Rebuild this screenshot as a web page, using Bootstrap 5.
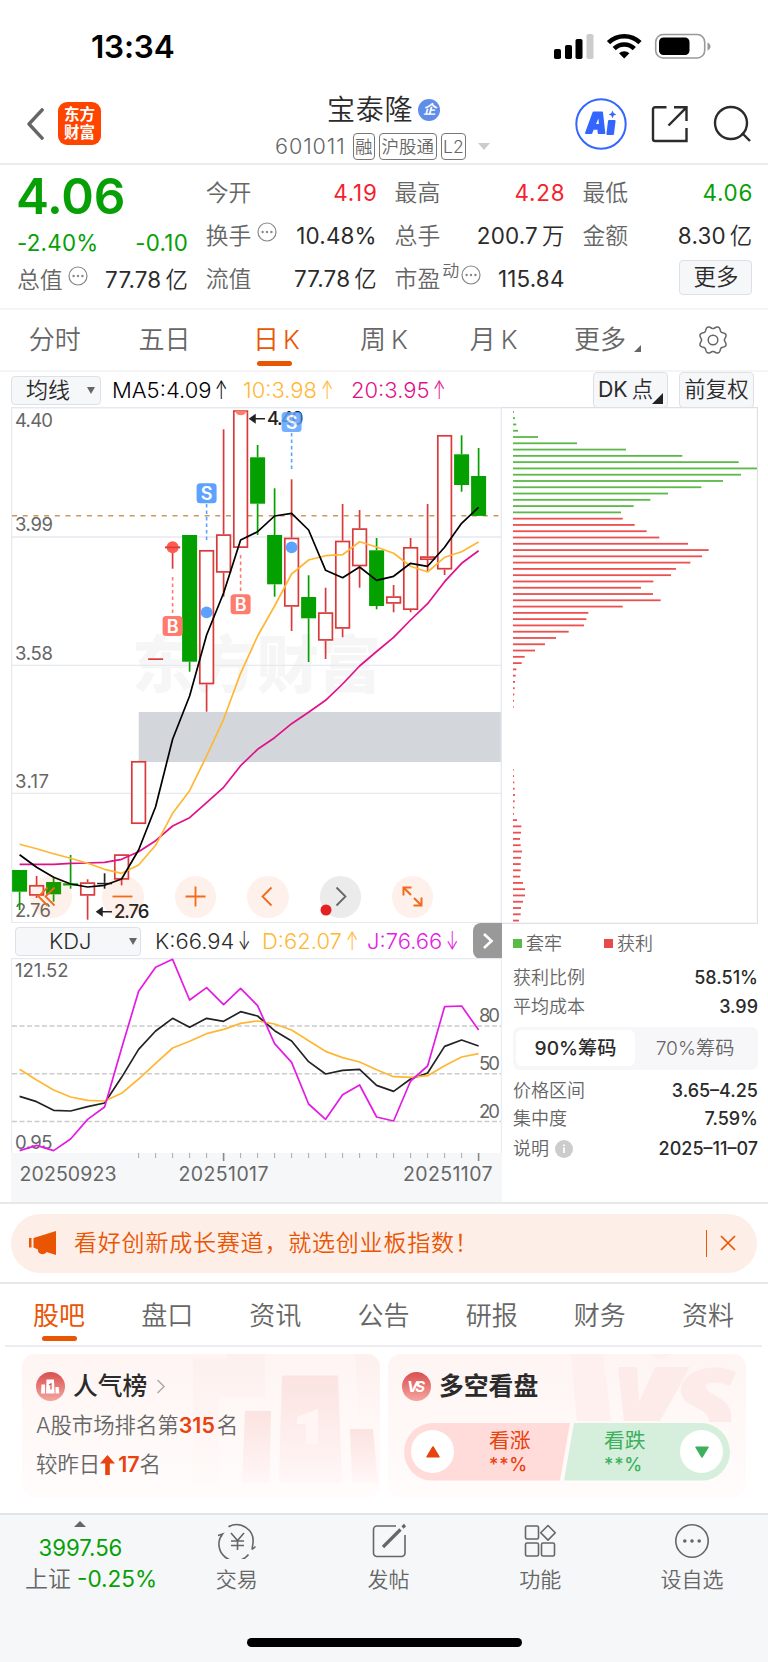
<!DOCTYPE html>
<html lang="zh-CN">
<head>
<meta charset="utf-8">
<meta name="viewport" content="width=device-width, initial-scale=1">
<title>宝泰隆 601011</title>
<link href="https://cdn.jsdelivr.net/npm/bootstrap@5.3.0/dist/css/bootstrap.min.css" rel="stylesheet">
<style>
body{font-family:Inter,"Noto Sans CJK SC",sans-serif;color:#2b2b2b;background:#fff;line-height:1;font-size:22px;font-weight:400;width:768px;height:1662px;overflow:hidden}
svg{display:block;flex:none}
svg text{font-family:Inter,"Noto Sans CJK SC",sans-serif}
.cjk-light{font-weight:350}
.gray{color:#666}.up{color:#f5222d}.down{color:#06a006}.brand{color:#ea5504}
.status{height:92px;padding:2px 57px 0 91px}
.clock{font-size:31.5px;font-weight:600;letter-spacing:-.2px;color:#000}
.top{height:73px;border-bottom:2px solid #ececec;padding:0 17px 0 26px}
.logo{width:43px;height:43px;border-radius:9px;background:#ff4400;color:#fff;font-size:15.5px;line-height:17.5px;font-weight:700;margin-left:14px}
.sname{font-size:28px;letter-spacing:.8px}
.ent{width:22px;height:22px;border-radius:50%;background:#5f8de9;color:#fff;font-size:13px;font-weight:700;margin-left:5px}
.tagbox{border:1.5px solid #777;border-radius:4px;height:27px;font-size:17.5px;padding:0 1.5px;color:#666}
.quote{height:145px;border-bottom:2px solid #f5f5f6;display:grid;grid-template-columns:171px 171px 170px 170px;column-gap:17.8px;padding:7px 0 0 17px;align-content:start}
.qcell{height:43px;font-size:22.4px}
.qcell>:last-child:not(.gray):not(.morebtn){letter-spacing:.2px}
.qcell .up,.qcell .down{letter-spacing:.8px!important;margin-right:-.8px}
.qcell .gray{font-size:22.8px}
.price{font-size:49.5px;font-weight:600;letter-spacing:-.2px;margin-left:-1px}
.morebtn{width:73px;height:35px;background:#f6f7f9;border:1.5px solid #dde0e8;border-radius:4px;font-size:22.5px}
.periods{height:62px;border-bottom:2px solid #f5f5f6;font-size:26px}
.periods>div,.tabs>div{flex:1 1 0;min-width:0;height:100%;position:relative}
.on::after{content:"";position:absolute;left:50%;margin-left:-17.5px;width:35.5px;height:5.5px;border-radius:3px;background:#ea5504;bottom:4px}
.ind{height:35px;font-size:22px;padding:0 12px 0 11px}
.arw{display:inline-block;transform:scale(.68,1.15);transform-origin:left;margin-left:4px}
.pick{background:#f6f7f9;border:1.5px solid #dde0e8;border-radius:4px;height:29px}
.tallbtn{background:#f6f7f9;border:1.5px solid #dde0e8;border-radius:4px;height:36px;width:75px;font-size:21.3px;position:relative}
.tri{width:0;height:0;border:solid transparent}
.leftcol{width:491px;margin-left:11px}
.rightcol{width:256px;color:#666;font-size:18px}
.tools{position:absolute;left:19px;top:469px;gap:30.9px}
.tools div{width:41.5px;height:41.5px;border-radius:50%;background:rgba(240,90,20,.085);position:relative}
.nextbtn{width:29px;height:36px;background:#999;border-radius:8px 0 0 8px}
.stat{margin-left:11px;width:245px}
.stat b{font-weight:500;color:#2b2b2b;font-size:18px}
.seg{height:42.5px;background:#f7f7f9;border-radius:7px;padding:3px;margin:6px 0 7px;font-size:19.2px}
.seg .cur{background:#fff;border-radius:6px;width:119px;height:36px;color:#2b2b2b;font-weight:500}
.promo{height:58.5px;border-radius:30px;background:#fdeee8;margin:10px 11px 10px;padding:0 20px 0 17px;font-size:23px;letter-spacing:.8px}
.tabs{height:63px;border-bottom:2px solid #ededef;margin:0 6px 0 5px;font-size:26px;padding-top:2px}
.panel{width:358px;height:143px;border-radius:13px;background:linear-gradient(#fef5f3,#fffcfb);position:relative;overflow:hidden}
.panel>.deco{position:absolute;left:0;top:0}
.ptitle{font-size:24.8px;font-weight:500;color:#2b2b2b}
.hot{color:#e8420f;font-weight:600}
.vote{height:58px;width:326px;margin-left:16px;position:relative;font-size:20.8px}
.half{width:166px;height:58px}
.half.r{background:#ffdcd9;border-radius:29px 0 0 29px;clip-path:polygon(0 0,100% 0,156px 100%,0 100%);color:#e8420f}
.half.g{background:#d5efdc;border-radius:0 29px 29px 0;clip-path:polygon(10px 0,100% 0,100% 100%,0 100%);margin-left:-6px;color:#3cb05c}
.disc{width:43px;height:43px;border-radius:50%;background:#fff}
.pct{font-size:18px;font-weight:500;letter-spacing:.8px;margin-top:5px}
.dock{height:149px;border-top:2px solid #e3e4e6;background:#f6f7f9;position:relative;font-size:21px;color:#666}
.dock>.it{width:151.9px;padding-top:8px}
.homebar{position:absolute;left:247px;top:123px;width:275px;height:9px;border-radius:5px;background:#000}
</style>
</head>
<body>
<svg width="0" height="0" class="position-absolute"><symbol id="dots" viewBox="0 0 20 20"><circle cx="10" cy="10" r="9" fill="none" stroke="#888" stroke-width="1.2"/><g fill="#888"><circle cx="5.6" cy="10" r="1.2"/><circle cx="10" cy="10" r="1.2"/><circle cx="14.4" cy="10" r="1.2"/></g></symbol></svg>

<div class="status d-flex align-items-center justify-content-between">
  <div class="clock">13:34</div>
  <svg width="158" height="27" viewBox="0 0 158 27" style="margin-top:-2px">
    <rect x="1" y="16" width="7" height="10" rx="1.8"/><rect x="12" y="12" width="7" height="14" rx="1.8"/><rect x="22.500" y="6" width="7" height="20" rx="1.800"/><rect x="33.500" y="1" width="7" height="25" rx="1.800" fill="#ccc"/>
    <g fill="none" stroke="#000" stroke-width="4.600"><path d="M55.500 9.700a22.500 22.500 0 0 1 31.500 0"/><path d="M61.200 15.600a14.500 14.500 0 0 1 20.100 0"/></g>
    <path d="M71.200 25.500l-5.200-5.200a7.500 7.500 0 0 1 10.400 0z"/>
    <rect x="102.700" y="1.500" width="49" height="23.500" rx="7.500" fill="none" stroke="#999" stroke-width="1.600"/><rect x="106" y="4.500" width="30.500" height="17.500" rx="4.500"/><path d="M154.500 9.500v8c4-1.500 4-6.500 0-8z" fill="#999"/>
  </svg>
</div>

<header class="top d-flex align-items-center">
  <div class="d-flex align-items-center" style="width:249px;margin-top:-8px">
    <svg width="18" height="32" viewBox="0 0 18 32"><path d="M16 2L3 16l13 14" fill="none" stroke="#666" stroke-width="3.400" stroke-linecap="square" stroke-linejoin="round"/></svg>
    <div class="logo d-flex flex-column align-items-center justify-content-center"><span>东方</span><span>财富</span></div>
  </div>
  <div class="d-flex flex-column align-items-start" style="width:238px;margin-top:2px">
    <div class="d-flex align-items-center" style="margin-left:52px;height:36px"><span class="sname cjk-light">宝泰隆</span><span class="ent d-flex align-items-center justify-content-center fst-italic">企</span></div>
    <div class="d-flex align-items-center" style="height:38px;gap:4px"><span class="gray" style="font-size:21.600px;letter-spacing:.9px;margin-right:3px;font-weight:300">601011</span><span class="tagbox cjk-light d-flex align-items-center">融</span><span class="tagbox cjk-light d-flex align-items-center">沪股通</span><span class="tagbox d-flex align-items-center fw-light">L2</span><i class="tri" style="border-width:7px 6px 0;border-top-color:#ccc;margin-left:8px"></i></div>
  </div>
  <div class="d-flex align-items-center justify-content-end" style="width:238px;gap:24px;margin-top:-7px">
    <svg width="52" height="52" viewBox="0 0 52 52"><circle cx="26" cy="26" r="24.700" fill="none" stroke="#3466ff" stroke-width="2"/><g fill="#3466ff" stroke="#3466ff" stroke-linejoin="round" stroke-width="2"><path d="M18.500 14.500h8.500l2.300 20.500h-5.600l-.4-4.300h-5.300l-1.600 4.300H11z"/><path d="M34 23h5.600l-1.600 13h-5.600z"/></g><path d="M23.400 20.500l.5 5.500h-2.800z" fill="#fff"/><path d="M37.500 12.500l1.200 2.700 2.700 1.200-2.700 1.200-1.200 2.700-1.200-2.700-2.700-1.200 2.700-1.200z" fill="#3466ff"/></svg>
    <svg width="38" height="38" viewBox="0 0 38 38" fill="none" stroke="#2b2b2b" stroke-width="2.400"><path d="M15.500 2.300H4a2 2 0 0 0-2 2V34a2 2 0 0 0 2 2h31.500V23M23 2.300h12.500V16M35.500 2.300L17.500 20.500"/></svg>
    <svg width="38" height="38" viewBox="0 0 38 38" fill="none" stroke="#2b2b2b" stroke-width="2.400"><circle cx="18" cy="18" r="16"/><path d="M29 28l8 8"/></svg>
  </div>
</header>

<section class="quote">
  <div>
    <div class="price down d-flex align-items-center" style="height:48px;padding-top:1px">4.06</div>
    <div class="d-flex justify-content-between align-items-center down" style="height:42px;padding-top:4px;font-size:22.300px;letter-spacing:.25px"><span>-2.40%</span><span>-0.10</span></div>
    <div class="qcell d-flex justify-content-between align-items-center" style="height:37px"><span class="gray cjk-light d-flex">总值<svg width="20" height="20" style="margin:-3px 0 0 5px"><use href="#dots"/></svg></span><span>77.78<span class="cjk-light ps-1">亿</span></span></div>
  </div>
  <div>
    <div class="qcell d-flex justify-content-between align-items-center"><span class="gray cjk-light">今开</span><span class="up">4.19</span></div>
    <div class="qcell d-flex justify-content-between align-items-center"><span class="gray cjk-light d-flex">换手<svg width="20" height="20" style="margin:-3px 0 0 6px"><use href="#dots"/></svg></span><span>10.48%</span></div>
    <div class="qcell d-flex justify-content-between align-items-center"><span class="gray cjk-light">流值</span><span>77.78<span class="cjk-light ps-1">亿</span></span></div>
  </div>
  <div>
    <div class="qcell d-flex justify-content-between align-items-center"><span class="gray cjk-light">最高</span><span class="up">4.28</span></div>
    <div class="qcell d-flex justify-content-between align-items-center"><span class="gray cjk-light">总手</span><span>200.7<span class="cjk-light ps-1">万</span></span></div>
    <div class="qcell d-flex justify-content-between align-items-center"><span class="gray cjk-light d-flex">市盈<span style="font-size:17px;margin:-5px 0 0 2px">动</span><svg width="20" height="20" style="margin:-3px 0 0 2px"><use href="#dots"/></svg></span><span>115.84</span></div>
  </div>
  <div>
    <div class="qcell d-flex justify-content-between align-items-center"><span class="gray cjk-light">最低</span><span class="down">4.06</span></div>
    <div class="qcell d-flex justify-content-between align-items-center"><span class="gray cjk-light">金额</span><span>8.30<span class="cjk-light ps-1">亿</span></span></div>
    <div class="qcell d-flex justify-content-end align-items-center"><span class="morebtn d-flex align-items-center justify-content-center cjk-light" style="margin-top:-4px">更多</span></div>
  </div>
</section>

<nav class="periods d-flex gray cjk-light">
  <div class="d-flex align-items-center justify-content-center">分时</div>
  <div class="d-flex align-items-center justify-content-center">五日</div>
  <div class="d-flex align-items-center justify-content-center on brand"><span class="ps-1">日<span style="margin-left:4px">K</span></span></div>
  <div class="d-flex align-items-center justify-content-center">周<span style="margin-left:5px">K</span></div>
  <div class="d-flex align-items-center justify-content-center">月<span style="margin-left:5px">K</span></div>
  <div class="d-flex align-items-center justify-content-center"><span class="d-flex ps-2">更多<i class="tri" style="border-width:0 0 7px 7px;border-bottom-color:#666;margin:18px 0 0 8px"></i></span></div>
  <div class="d-flex align-items-center justify-content-center"><svg id="gear" width="30" height="30" viewBox="-15 -15 30 30" fill="none" stroke="#666" stroke-width="1.500"><circle r="4.800"/><path id="gearPath" stroke-linejoin="round"/></svg></div>
</nav>

<div class="ind d-flex align-items-center">
  <div class="pick d-flex align-items-center cjk-light" style="width:90px;padding-left:14px;margin-top:1px">均线<i class="tri" style="border-width:7px 4px 0;border-top-color:#666;margin-left:17px"></i></div>
  <span class="fw-light text-nowrap" style="margin-left:11px;color:#000;width:131px">MA5:4.09<span class="arw">↑</span></span>
  <span class="fw-light text-nowrap" style="color:#ffb733;width:108px">10:3.98<span class="arw">↑</span></span>
  <span class="fw-light text-nowrap" style="color:#e0118a">20:3.95<span class="arw">↑</span></span>
  <div class="tallbtn d-flex align-items-center ms-auto" style="padding-left:4px">DK<span class="cjk-light" style="margin-left:4px">点</span><i class="tri position-absolute" style="border-width:0 0 11px 11px;border-bottom-color:#222;right:4px;bottom:3px"></i></div>
  <div class="tallbtn d-flex align-items-center justify-content-center cjk-light" style="margin-left:11px;margin-right:2px">前复权</div>
</div>

<main class="d-flex" style="height:795px">
  <div class="leftcol">
    <div class="position-relative">
      <svg id="kline" width="491" height="516" viewBox="11 407 491 516"></svg>
      <div class="tools d-flex">
        <div><svg width="41" height="41" viewBox="-20.500 -20.500 41 41" fill="none" stroke="#f26a1b" stroke-width="1.800"><path d="M-3-9l-9 9 9 9M4-9l-9 9 9 9"/></svg></div>
        <div><svg width="41" height="41" viewBox="-20.500 -20.500 41 41" stroke="#f26a1b" stroke-width="1.800"><path d="M-10 0H10"/></svg></div>
        <div><svg width="41" height="41" viewBox="-20.500 -20.500 41 41" stroke="#f26a1b" stroke-width="1.800"><path d="M-10 0H10M0-10V10"/></svg></div>
        <div><svg width="41" height="41" viewBox="-20.500 -20.500 41 41" fill="none" stroke="#f26a1b" stroke-width="1.800"><path d="M4-9l-9 9 9 9"/></svg></div>
        <div style="background:#ebebeb"><svg width="41" height="41" viewBox="-20.500 -20.500 41 41" fill="none" stroke="#666" stroke-width="1.800" overflow="visible"><path d="M-4-9l9 9-9 9"/><circle cx="-14.500" cy="13.500" r="5.500" fill="#e52020" stroke="none"/></svg></div>
        <div><svg width="41" height="41" viewBox="-20.500 -20.500 41 41" fill="none" stroke="#f26a1b" stroke-width="2"><path d="M-9-1V-9H-1M-9-9L-1.500-1.500M9 1V9H1M9 9L1.500 1.500"/></svg></div>
      </div>
    </div>
    <div class="d-flex align-items-center" style="height:35px;font-size:22px">
      <div class="pick d-flex align-items-center" style="width:126px;margin-left:4px;padding-left:33px;margin-top:1px"><span style="font-weight:300">KDJ</span><i class="tri" style="border-width:7px 4px 0;border-top-color:#666;margin-left:37px"></i></div>
      <span class="fw-light text-nowrap" style="margin-left:14px;width:107px">K:66.94<span class="arw">↓</span></span>
      <span class="fw-light text-nowrap" style="color:#ffb733;width:105px">D:62.07<span class="arw">↑</span></span>
      <span class="fw-light text-nowrap" style="color:#e31be3;width:95px">J:76.66<span class="arw">↓</span></span>
      <div class="nextbtn d-flex align-items-center justify-content-center ms-auto"><svg width="12" height="18" viewBox="0 0 12 18"><path d="M2 2l7.500 7L2 16" fill="none" stroke="#fff" stroke-width="2.600"/></svg></div>
    </div>
    <svg id="kdj" width="491" height="244" viewBox="11 958 491 244"></svg>
  </div>
  <div class="rightcol">
    <svg id="chips" width="256" height="517" viewBox="501 407 256 517"></svg>
    <div class="stat">
      <div class="d-flex align-items-center cjk-light" style="height:39.500px"><i style="width:9px;height:9px;background:#5bb947"></i><span style="margin-left:4px;width:78px">套牢</span><i style="width:9px;height:9px;background:#e84a4a"></i><span style="margin-left:4px">获利</span></div>
      <div class="d-flex align-items-center justify-content-between cjk-light" style="height:29px">获利比例<b>58.51%</b></div>
      <div class="d-flex align-items-center justify-content-between cjk-light" style="height:28.500px">平均成本<b>3.99</b></div>
      <div class="seg d-flex align-items-center"><div class="cur d-flex align-items-center justify-content-center">90%筹码</div><div class="flex-fill text-center cjk-light">70%筹码</div></div>
      <div class="d-flex align-items-center justify-content-between cjk-light" style="height:28px">价格区间<b>3.65–4.25</b></div>
      <div class="d-flex align-items-center justify-content-between cjk-light" style="height:28px">集中度<b>7.59%</b></div>
      <div class="d-flex align-items-center cjk-light" style="height:32px">说明<svg width="18" height="18" viewBox="0 0 18 18" style="margin-left:6px"><circle cx="9" cy="9" r="9" fill="#ccc"/><path d="M9 7.500V13M9 4.500v1.800" stroke="#fff" stroke-width="1.800"/></svg><b class="ms-auto">2025–11–07</b></div>
    </div>
  </div>
</main>

<section style="border-top:2px solid #e8e8ea;border-bottom:2px solid #e8e8ea;height:82px" class="overflow-hidden">
  <div class="promo brand d-flex align-items-center cjk-light">
    <svg width="28" height="26" viewBox="0 0 28 26" fill="#ea5504"><path d="M1 8h2.500v9.500H1zM5.500 8L28 1v24l-9.500-3c-1 2-4 3-6.500 1.500-2-1-2-2.500-2-4l-4.500-2z"/></svg>
    <span style="margin-left:18px">看好创新成长赛道，就选创业板指数！</span>
    <i class="ms-auto" style="width:1.500px;height:27px;background:#ea5504"></i>
    <svg width="18" height="18" viewBox="0 0 18 18" style="margin-left:12px"><path d="M2 2l14 14M16 2L2 16" stroke="#ea5504" stroke-width="1.700"/></svg>
  </div>
</section>

<nav class="tabs d-flex gray cjk-light">
  <div class="d-flex align-items-center justify-content-center on brand" style="font-weight:400">股吧</div>
  <div class="d-flex align-items-center justify-content-center">盘口</div>
  <div class="d-flex align-items-center justify-content-center">资讯</div>
  <div class="d-flex align-items-center justify-content-center">公告</div>
  <div class="d-flex align-items-center justify-content-center">研报</div>
  <div class="d-flex align-items-center justify-content-center">财务</div>
  <div class="d-flex align-items-center justify-content-center">资料</div>
</nav>

<section class="d-flex" style="height:166px;padding:7px 22px 0;gap:8px">
  <div class="panel gray" style="font-size:21.400px">
    <svg class="deco" width="358" height="143" viewBox="22 1354 358 143">
      <defs><linearGradient id="fade" x1="0" y1="0" x2="0" y2="1"><stop offset="0" stop-color="#fbe3e1"/><stop offset="1" stop-color="#fff7f6"/></linearGradient><linearGradient id="fade2" x1="0" y1="0" x2="0" y2="1"><stop offset="0" stop-color="#fdf0ee"/><stop offset="1" stop-color="#fffaf9"/></linearGradient></defs>
      <path d="M193 1359h34v-5h38v43h-46v86h-26z" fill="url(#fade2)"/><path d="M355 1354h25v90h-20z" fill="url(#fade2)"/>
      <g fill="url(#fade)"><path d="M282 1375.500h56l4 107h-63z"/><path d="M245 1411h26l-1.500 71.500H242z"/><path d="M350 1429h23l5 53.500h-26z"/></g>
      <path d="M297 1417l21-8v35h-12v-20h-9z" fill="#fff5f4"/>
    </svg>
    <div class="position-relative" style="padding:12px 0 0 14px">
      <div class="d-flex align-items-center" style="height:41px"><svg width="29" height="29" viewBox="0 0 29 29"><defs><linearGradient id="ball" x1="0" y1="0" x2="0" y2="1"><stop offset="0" stop-color="#d94f4f"/><stop offset="1" stop-color="#f6a5a0"/></linearGradient></defs><circle cx="14.500" cy="14.500" r="14.500" fill="url(#ball)"/><path d="M10.500 7.500h7.500l.5 14h-8.500zM5.500 12.500h3.500v9H5zM19.500 15h3.300l.5 6.500h-3.800z" fill="#fff"/><path d="M13 13l2-1.200v5.700" fill="none" stroke="#d94f4f" stroke-width="1.200"/></svg><span class="ptitle" style="margin-left:8px">人气榜</span><svg width="10" height="15" viewBox="0 0 10 15" style="margin-left:9px"><path d="M1.500 1l6.500 6.500L1.500 14" fill="none" stroke="#aaa" stroke-width="1.500"/></svg></div>
      <div class="cjk-light d-flex align-items-center" style="height:38px">A股市场排名第<span class="hot">315</span><span style="margin-left:2px">名</span></div>
      <div class="cjk-light d-flex align-items-center" style="height:39px">较昨日<svg width="15" height="20" viewBox="0 0 15 20" class="ms-0"><path d="M7.500 0L15 8.500H9.800V20H5.200V8.500H0z" fill="#e8420f"/></svg><span class="hot" style="margin-left:3px">17</span><span>名</span></div>
    </div>
  </div>
  <div class="panel">
    <svg class="deco" width="358" height="143" viewBox="388 1354 358 143">
      <path d="M571 1354h32l8 67h-34z" fill="#fdf0ee"/><path d="M649 1354h24l-12 6z" fill="#fdf0ee"/>
      <g fill="#fdebe9"><path d="M618 1367h19l2 35 16-35h35l-30 54h-36z"/><path d="M736 1372c-30-14-62 5-54 24 5 12 28 12 27 26h22c4-24-22-26-25-34-2-8 15-6 24-2z"/></g>
    </svg>
    <div class="position-relative" style="padding-top:12px">
      <div class="d-flex align-items-center" style="height:41px;padding-left:14px"><svg width="29" height="29" viewBox="0 0 29 29"><circle cx="14.500" cy="14.500" r="14.500" fill="url(#ball)"/><text x="14" y="20" text-anchor="middle" fill="#fff" font-size="15" font-weight="700" font-style="italic" textLength="18">VS</text></svg><span class="ptitle" style="margin-left:8px;font-weight:700">多空看盘</span></div>
      <div class="vote d-flex" style="margin-top:15.500px">
        <div class="half r d-flex align-items-center"><div class="disc d-flex align-items-center justify-content-center" style="margin-left:7px"><svg width="14" height="12" viewBox="0 0 14 12"><path d="M7 1l6 9.800H1z" fill="#e8420f" stroke="#e8420f" stroke-width="1.500" stroke-linejoin="round"/></svg></div><div style="margin:2px 0 0 35px">看涨<div class="pct">**%</div></div></div>
        <div class="half g d-flex align-items-center"><div style="margin:2px 0 0 40px">看跌<div class="pct">**%</div></div><div class="disc d-flex align-items-center justify-content-center ms-auto" style="margin-right:7px"><svg width="14" height="12" viewBox="0 0 14 12"><path d="M7 11l6-9.800H1z" fill="#3cb05c" stroke="#3cb05c" stroke-width="1.500" stroke-linejoin="round"/></svg></div></div>
      </div>
    </div>
  </div>
</section>

<footer class="dock d-flex cjk-light">
  <div style="width:161px;padding-top:6px"><i class="tri d-block mx-auto" style="border-width:0 6px 6px;border-bottom-color:#666"></i><div class="down text-center" style="font-size:22.200px;font-weight:400;margin-top:10px">3997.56</div><div style="margin-top:9px;font-size:23px;padding-left:25px" class="text-nowrap">上证<span class="down" style="margin-left:6px;font-weight:400;font-size:22.600px">-0.25%</span></div></div>
  <div class="it d-flex flex-column align-items-center"><svg width="40" height="36" viewBox="0 0 40 36" fill="none" stroke="#666" stroke-width="1.600"><path d="M11.500 3.800A16.500 16.500 0 0 1 36 20l-1 6.500M38.500 23.500l-3.500 3M31.500 31.500A16.500 16.500 0 0 1 5.500 11L1 12.500M5.500 11l-1.500 3"/><path d="M14 10l6.500 7.500L27 10M20.500 17.500V27M14 18h13M14 22.500h13"/></svg><span style="margin-top:10px">交易</span></div>
  <div class="it d-flex flex-column align-items-center"><svg width="36" height="36" viewBox="0 0 36 36" fill="none" stroke="#666" stroke-width="1.600"><path d="M25 3H6a3.500 3.500 0 0 0-3.500 3.500V30A3.500 3.500 0 0 0 6 33.500h24.500A3.500 3.500 0 0 0 34 30V12"/><path d="M12 24l17.500-17.500" stroke-width="3.200"/><path d="M31.500 4.500L34 2" stroke-width="3.200"/></svg><span style="margin-top:10px">发帖</span></div>
  <div class="it d-flex flex-column align-items-center"><svg width="34" height="36" viewBox="0 0 34 36" fill="none" stroke="#666" stroke-width="1.600" stroke-linejoin="round"><rect x="2.500" y="3" width="13" height="13" rx="1.500"/><rect x="2.500" y="20" width="13" height="13" rx="1.500"/><rect x="18.500" y="20" width="13" height="13" rx="1.500"/><path d="M25 2.500l7.300 7.300-7.300 7.300-7.300-7.300z"/></svg><span style="margin-top:10px">功能</span></div>
  <div class="it d-flex flex-column align-items-center"><svg width="36" height="36" viewBox="0 0 36 36"><circle cx="18" cy="18" r="16.200" fill="none" stroke="#666" stroke-width="1.600"/><g fill="#666"><circle cx="10.800" cy="18" r="1.800"/><circle cx="18" cy="18" r="1.800"/><circle cx="25.200" cy="18" r="1.800"/></g></svg><span style="margin-top:10px">设自选</span></div>
  <div class="homebar"></div>
</footer>

<script>
const X = i => 19.6 + 17 * i;
const rect = (x,y,w,h,a) => `<rect x="${x}" y="${y}" width="${w}" height="${h}" ${a}/>`;
const line = (x1,y1,x2,y2,a) => `<line x1="${x1}" y1="${y1}" x2="${x2}" y2="${y2}" ${a}/>`;
const text = (x,y,t,len,a='') => `<text x="${x}" y="${y}" textLength="${len}" font-size="18.500" fill="#666" ${a}>${t}</text>`;
const poly = (ys,c,w=1.7) => `<polyline fill="none" stroke="${c}" stroke-width="${w}" stroke-linejoin="round" points="${ys.map((y,i)=>X(i)+','+y).join(' ')}"/>`;

// Candles: colour, high, body top, body bottom, low
const candles = [
 ['g',870,870,891.7,910],['r',876,885,895.7,898],['g',876.7,882,894.3,901.7],['g',855,883.3,885.5,888.7],
 ['r',879.3,882.3,895.7,919.7],['k',873.3,882.8,884.3,888.7],['r',854.3,854.3,879.7,885.3],['r',761,761,824,824],
 ['d',658.3,658.3,660,660],['d',547,546.6,548.2,568.7],['g',535,535,661.7,671.7],['r',550,550,684.3,711.7],
 ['r',429.3,534.3,572.7,596.7],['r',410.3,410.3,547.9,547.9],['g',445,457.3,503.7,535],['g',488.3,535,584.3,596.7],
 ['r',479.3,537.7,606.7,631],['g',575.3,597,618.3,662],['r',587.7,612.3,640.7,659],['r',504,540.7,628.7,637.3],
 ['r',510,528.3,566.3,587.7],['g',538,550.3,606,609.3],['r',585,596.3,603.7,612.3],['r',538,547,610,612.3],
 ['r',504,556.3,560,571.7],['r',435,435,569.5,575],['g',435.3,454.3,485,491.7],['g',448,476,515.9,515.9]];
const ma5=[854.7,867.3,877.3,884,887,885.3,879,850,806.7,739.3,696,635,593,540,531.7,516,513.3,530,570.3,577.7,567,580.3,576.3,563.3,566.3,547.3,523.3,507.3];
const ma10=[844.3,848.7,853.7,858.3,863.3,869.3,873.3,865,845.3,813.3,790.7,756,719.3,673.3,636,606,574,560,555.7,554.7,541.7,547,553.3,566.3,572,557.3,551.7,542];
const ma20=[864.3,864.3,864.3,863.3,863,862.3,859.3,851.7,840.7,826,817.7,802.7,787.3,765.7,749.3,737.7,723.7,712.3,700.3,684,666,651.5,637.3,620,603.7,581.7,563.3,550.7];

let s = text(132,688,'东方财富',249,'style="font-size:62px;font-weight:900;fill:#f6f6f7"');
s += rect(138.7,712,363,50,'fill="#d3d6db"');
[407.7,537,665.4,793.4,922.6].forEach(y => s += line(11,y,502,y,'stroke="#e6e9f0" stroke-width="1.400"'));
s += line(11.6,407,11.6,923,'stroke="#e6e9f0" stroke-width="1.300"') + line(501.3,407,501.3,923,'stroke="#e6e9f0" stroke-width="1.300"');
s += line(12,515.7,501,515.7,'stroke="#d0965a" stroke-width="1.500" stroke-dasharray="5 5.700"');
s += text(15,427,'4.40',38) + text(15,530.500,'3.99',38) + text(15,659.600,'3.58',38) + text(15,788,'3.17',34) + text(15,917,'2.76',36);
candles.forEach(([c,h,t,b,l],i) => {
  const x = X(i), col = {g:'#04a000',r:'#d93a3a',k:'#222',d:'#d93a3a'}[c];
  if (h < t) s += line(x,h,x,t,`stroke="${col}" stroke-width="1.700"`);
  if (l > b) s += line(x,b,x,l,`stroke="${col}" stroke-width="1.700"`);
  s += c === 'r' ? rect(x-6.8,t+.8,13.6,b-t-1.6,`fill="#fff" stroke="${col}" stroke-width="1.700"`) : rect(x-7.5,t,15,b-t,`fill="${col}"`);
});
// Trade marks
const mark = (x,y,ch,c) => rect(x-10,y-10,20,20,`rx="3.500" fill="${c}"`) + `<text x="${x}" y="${y+6.5}" text-anchor="middle" font-size="18" font-weight="600" fill="#fff">${ch}</text>`;
const dash = (x,a,b,c) => line(x,a,x,b,`stroke="${c}" stroke-width="1.600" stroke-dasharray="3.500 3"`);
const red='#ff7b6b', blue='#5ea2ff';
s += `<circle cx="172.600" cy="547.300" r="6" fill="#ff5a4d"/>` + rect(165.1,546.6,15,1.6,'fill="#d93a3a"');
s += `<path d="M235 411h11.500a6 6 0 0 1-11.500 0z" fill="${red}"/>`;
s += dash(172.6,577,615,red) + mark(172.6,626,'B',red) + dash(240.6,555,594,red) + mark(240.6,604.3,'B',red);
s += dash(206.6,504,543,blue) + mark(206.6,493.3,'S',blue);
s += `<circle cx="206.600" cy="612.300" r="5.900" fill="${blue}"/><circle cx="291.600" cy="547.300" r="5.900" fill="${blue}"/>`;
s += poly(ma20,'#e0118a') + poly(ma10,'#ffb733') + poly(ma5,'#000');
s += `<path d="M265 418.700H251M255 415.200l-5 3.500 5 3.500z" fill="#222" stroke="#222" stroke-width="1.500"/>` + text(267,425,'4.40',36.5,'style="fill:#222;font-weight:500"');
s += dash(291.6,433,472,blue) + `<g opacity=".85">${mark(291.6,422,'S',blue)}</g>`;
s += `<path d="M112 911.700H98M102 908.200l-5 3.500 5 3.500z" fill="#222" stroke="#222" stroke-width="1.500"/>` + text(114,918,'2.76',35.5,'style="fill:#222;font-weight:500"');
document.getElementById('kline').innerHTML = s;

// Oscillator curves, thirds of a pixel from the panel origin
const up = a => a.map(v => 920 + v/3);
const K=up([529,545,571,573,560,549,472,388,333,295,322,295,304,275,288,332,363,425,462,451,448,496,514,477,459,379,360,378]);
const D=up([448,480,510,531,541,543,520,477,430,384,364,341,328,310,303,312,330,362,394,413,426,449,470,472,467,437,411,401]);
const J=up([692,676,692,657,598,561,385,214,142,118,240,203,254,205,257,371,427,552,598,524,495,591,603,483,438,260,258,330]);
let k = rect(11,1153,491,49,'fill="#f6f7f9"') + line(11,958.6,502,958.6,'stroke="#e6e9f0" stroke-width="1.400"') + line(11.6,958,11.6,1153,'stroke="#e6e9f0"') + line(501.3,958,501.3,1153,'stroke="#e6e9f0"');
[1026,1073.7,1121.4].forEach(y => k += line(12,y,501,y,'stroke="#ccc" stroke-width="1.500" stroke-dasharray="5 2.500"'));
k += text(15,976.500,'121.52',53.5) + text(15,1148.700,'0.95',37.5) + text(479,1022,'80',21) + text(479,1070,'50',21) + text(479,1118,'20',21);
for (let i=7;i<28;i++) k += (i===12||i===27) ? rect(X(i)-.8,1153,1.6,8,'fill="#888"') : rect(X(i)-.5,1153,1,5,'fill="#aaa"');
k += text(19.500,1181,'20250923',97,'style="font-size:19.500px"') + text(178.500,1181,'20251017',90,'style="font-size:19.500px"') + text(403,1181,'20251107',89.5,'style="font-size:19.500px"');
k += poly(K,'#222') + poly(D,'#ffb733') + poly(J,'#e31be3');
document.getElementById('kdj').innerHTML = k;

// Cost distribution: row index -> bar end
const green=[39,42,46,51,111,228,375,544,713,770,720,666,601,501,448,398,360];
const redA=[365,401,437,475,561,623,603,568,525,510,457,420,456,479,365,262,256,249,203,165,132,102,71,62,46,44,42,41,40,39,38];
const redB=[38,39,40,41,42,41,40,39,48,61,60,57,59,63,60,59,59,57,66,72,72,66,60,59,54];
let c = '';
const bars = (a,from,col) => a.forEach((e,i) => c += rect(512,411+(from+i)*6.28,(e-36)/3,1.8,`fill="${col}"`));
bars(green,0,'#5bb947'); bars(redA,17,'#ec4f4f'); bars(redB,57,'#ec4f4f');
c += `<path d="M501 407.600H756.500V923.500H501" fill="none" stroke="#dfe0e6" stroke-width="1.300"/>`;
document.getElementById('chips').innerHTML = c;

// Gear outline with eight soft lobes
let g = '';
for (let a=0;a<=360;a+=4) { const t=a*Math.PI/180, r=12.7+1.3*Math.cos(8*t+Math.PI); g += (a?'L':'M')+(r*Math.cos(t)).toFixed(2)+' '+(r*Math.sin(t)).toFixed(2); }
document.getElementById('gearPath').setAttribute('d', g+'Z');
</script>
<script src="https://cdn.jsdelivr.net/npm/bootstrap@5.3.0/dist/js/bootstrap.bundle.min.js"></script>
</body>
</html>
